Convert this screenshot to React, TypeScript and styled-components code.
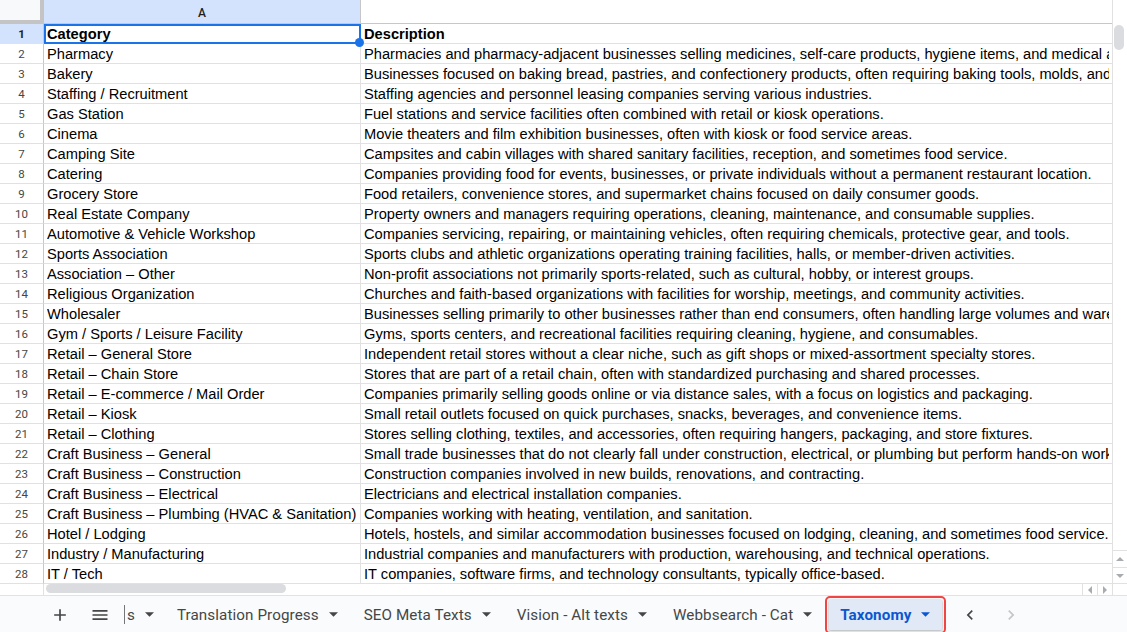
import React from "react";
import styled, { createGlobalStyle } from "styled-components";

const GlobalStyle = createGlobalStyle`
  html, body { margin: 0; padding: 0; background: #ffffff; overflow: hidden; }
  * { box-sizing: border-box; }
`;

const rows: [string, string][] = [
  ["Category", "Description"],
  ["Pharmacy", "Pharmacies and pharmacy-adjacent businesses selling medicines, self-care products, hygiene items, and medical aids."],
  ["Bakery", "Businesses focused on baking bread, pastries, and confectionery products, often requiring baking tools, molds, and packaging."],
  ["Staffing / Recruitment", "Staffing agencies and personnel leasing companies serving various industries."],
  ["Gas Station", "Fuel stations and service facilities often combined with retail or kiosk operations."],
  ["Cinema", "Movie theaters and film exhibition businesses, often with kiosk or food service areas."],
  ["Camping Site", "Campsites and cabin villages with shared sanitary facilities, reception, and sometimes food service."],
  ["Catering", "Companies providing food for events, businesses, or private individuals without a permanent restaurant location."],
  ["Grocery Store", "Food retailers, convenience stores, and supermarket chains focused on daily consumer goods."],
  ["Real Estate Company", "Property owners and managers requiring operations, cleaning, maintenance, and consumable supplies."],
  ["Automotive & Vehicle Workshop", "Companies servicing, repairing, or maintaining vehicles, often requiring chemicals, protective gear, and tools."],
  ["Sports Association", "Sports clubs and athletic organizations operating training facilities, halls, or member-driven activities."],
  ["Association – Other", "Non-profit associations not primarily sports-related, such as cultural, hobby, or interest groups."],
  ["Religious Organization", "Churches and faith-based organizations with facilities for worship, meetings, and community activities."],
  ["Wholesaler", "Businesses selling primarily to other businesses rather than end consumers, often handling large volumes and warehousing."],
  ["Gym / Sports / Leisure Facility", "Gyms, sports centers, and recreational facilities requiring cleaning, hygiene, and consumables."],
  ["Retail – General Store", "Independent retail stores without a clear niche, such as gift shops or mixed-assortment specialty stores."],
  ["Retail – Chain Store", "Stores that are part of a retail chain, often with standardized purchasing and shared processes."],
  ["Retail – E-commerce / Mail Order", "Companies primarily selling goods online or via distance sales, with a focus on logistics and packaging."],
  ["Retail – Kiosk", "Small retail outlets focused on quick purchases, snacks, beverages, and convenience items."],
  ["Retail – Clothing", "Stores selling clothing, textiles, and accessories, often requiring hangers, packaging, and store fixtures."],
  ["Craft Business – General", "Small trade businesses that do not clearly fall under construction, electrical, or plumbing but perform hands-on work."],
  ["Craft Business – Construction", "Construction companies involved in new builds, renovations, and contracting."],
  ["Craft Business – Electrical", "Electricians and electrical installation companies."],
  ["Craft Business – Plumbing (HVAC & Sanitation)", "Companies working with heating, ventilation, and sanitation."],
  ["Hotel / Lodging", "Hotels, hostels, and similar accommodation businesses focused on lodging, cleaning, and sometimes food service."],
  ["Industry / Manufacturing", "Industrial companies and manufacturers with production, warehousing, and technical operations."],
  ["IT / Tech", "IT companies, software firms, and technology consultants, typically office-based."],
];

const tabs = ["s", "Translation Progress", "SEO Meta Texts", "Vision - Alt texts", "Webbsearch - Cat"];

const Page = styled.div`
  width: 1127px;
  height: 632px;
  display: flex;
  flex-direction: column;
  overflow: hidden;
`;

const Main = styled.div`
  display: flex;
  height: 595px;
`;

const Sheet = styled.div`
  flex: 1;
  min-width: 0;
  display: flex;
  flex-direction: column;
`;

const GridRow = styled.div<{ $header?: boolean }>`
  display: grid;
  grid-template-columns: 44px 317px 1fr;
  height: ${(p) => (p.$header ? 24 : 20)}px;
`;

const Corner = styled.div`
  background: #f8f9fa;
  border-right: 4px solid #c4c4c4;
  border-bottom: 4px solid #c4c4c4;
`;

const ColHeader = styled.div<{ $selected?: boolean; $last?: boolean }>`
  background: ${(p) => (p.$selected ? "#d3e3fd" : "#ffffff")};
  border-bottom: 1px solid #c7c7c7;
  border-right: ${(p) => (p.$last ? "none" : "1px solid #c7c7c7")};
  display: flex;
  align-items: center;
  justify-content: center;
  font-family: "Roboto", "Liberation Sans", sans-serif;
  font-size: 12px;
  font-weight: 500;
  color: #1f1f1f;
  padding-top: 2px;
`;

const RowHeader = styled.div<{ $selected?: boolean }>`
  background: ${(p) => (p.$selected ? "#d3e3fd" : "#ffffff")};
  border-right: 1px solid #c7c7c7;
  border-bottom: 1px solid #e1e1e1;
  display: flex;
  align-items: center;
  justify-content: center;
  font-family: "Roboto", "Liberation Sans", sans-serif;
  font-size: 11.5px;
  font-weight: ${(p) => (p.$selected ? 700 : 400)};
  color: ${(p) => (p.$selected ? "#1f1f1f" : "#444746")};
`;

const Cell = styled.div<{ $bold?: boolean; $last?: boolean }>`
  position: relative;
  min-width: 0;
  border-bottom: 1px solid #e1e1e1;
  border-right: ${(p) => (p.$last ? "none" : "1px solid #e1e1e1")};
  display: flex;
  align-items: flex-end;
  padding: 0 3px 0 3px;
  font-family: "Liberation Sans", Arial, sans-serif;
  font-size: 14.67px;
  line-height: 18px;
  font-weight: ${(p) => (p.$bold ? 700 : 400)};
  color: #000000;
`;

const CellText = styled.span`
  display: block;
  width: 100%;
  overflow: hidden;
  white-space: nowrap;
`;

const Selection = styled.div`
  position: absolute;
  top: 0;
  left: 0;
  right: -1px;
  bottom: -1px;
  border: 2px solid #1a73e8;
  z-index: 5;
  pointer-events: none;
`;

const Handle = styled.div`
  position: absolute;
  right: -5px;
  bottom: -5px;
  width: 9px;
  height: 9px;
  border-radius: 50%;
  background: #1a73e8;
  z-index: 6;
`;

const HScrollRow = styled.div`
  display: flex;
  height: 11px;
`;

const HScrollLead = styled.div`
  width: 44px;
  border-right: 1px solid #e1e1e1;
`;

const HTrack = styled.div`
  flex: 1;
  padding-left: 2px;
`;

const HThumb = styled.div`
  width: 240px;
  height: 9px;
  border-radius: 5px;
  background: #dadce0;
`;

const ArrowButton = styled.div<{ $w?: number; $h?: number }>`
  width: ${(p) => p.$w ?? 15}px;
  height: ${(p) => p.$h ?? 15}px;
  border-left: 1px solid #e1e1e1;
  display: flex;
  align-items: center;
  justify-content: center;
`;

const VScroll = styled.div`
  width: 15px;
  border-left: 1px solid #e1e1e1;
  display: flex;
  flex-direction: column;
  background: #ffffff;
`;

const VTop = styled.div`
  height: 24px;
`;

const VTrack = styled.div`
  flex: 1;
  padding: 1px 0 0 1px;
`;

const VThumb = styled.div`
  width: 10px;
  height: 25px;
  border-radius: 5px;
  background: #dadce0;
`;

const VButton = styled.div<{ $h: number }>`
  height: ${(p) => p.$h}px;
  border-top: 1px solid #e1e1e1;
  display: flex;
  align-items: center;
  justify-content: center;
`;

const TabBar = styled.div`
  height: 37px;
  border-top: 1px solid #e1e3e1;
  background: #f9fbfd;
  display: flex;
  align-items: center;
  padding-left: 44px;
  padding-top: 1px;
  font-family: "Roboto", "Open Sans", sans-serif;
`;

const IconButton = styled.div`
  width: 32px;
  height: 32px;
  display: flex;
  align-items: center;
  justify-content: center;
  color: #444746;
  margin-right: 8px;
`;

const TabStrip = styled.div`
  display: flex;
  align-items: center;
  border-left: 1px solid #747775;
  height: 19px;
  overflow: visible;
`;

const Tab = styled.div<{ $active?: boolean; $clipped?: boolean }>`
  display: flex;
  align-items: center;
  gap: 10px;
  height: 30px;
  padding: 0 ${(p) => (p.$active ? 12 : p.$clipped ? 10 : 13)}px 0
    ${(p) => (p.$clipped ? 2 : p.$active ? 11 : 13)}px;
  margin-left: ${(p) => (p.$active ? 4 : 0)}px;
  font-size: 15.2px;
  letter-spacing: 0.1px;
  font-weight: ${(p) => (p.$active ? 700 : 400)};
  color: ${(p) => (p.$active ? "#0b57d0" : "#444746")};
  background: ${(p) => (p.$active ? "#e1e9f7" : "transparent")};
  border-radius: 1px;
  box-shadow: ${(p) => (p.$active ? "0 1px 3px rgba(60,64,67,0.35), 0 0 2px rgba(60,64,67,0.2)" : "none")};
  outline: ${(p) => (p.$active ? "2px solid #f04545" : "none")};
  outline-offset: 2px;
  white-space: nowrap;
`;

const Nav = styled.div`
  display: flex;
  align-items: center;
  gap: 9px;
  margin-left: 12px;
`;

const NavButton = styled.div<{ $disabled?: boolean }>`
  width: 32px;
  height: 32px;
  display: flex;
  align-items: center;
  justify-content: center;
  color: ${(p) => (p.$disabled ? "#c4c7c5" : "#444746")};
`;

const Caret = ({ color = "currentColor" }: { color?: string }) => (
  <svg width="9" height="5" viewBox="0 0 10 5">
    <path d="M0 0 L5 5 L10 0 Z" fill={color} />
  </svg>
);

const Tri = ({ dir }: { dir: "up" | "down" | "left" | "right" }) => {
  const d = {
    up: "M0 4 L4 0 L8 4 Z",
    down: "M0 0 L8 0 L4 4 Z",
    left: "M4 0 L4 8 L0 4 Z",
    right: "M0 0 L4 4 L0 8 Z",
  }[dir];
  const horiz = dir === "left" || dir === "right";
  return (
    <svg width={horiz ? 4 : 8} height={horiz ? 8 : 4} viewBox={horiz ? "0 0 4 8" : "0 0 8 4"}>
      <path d={d} fill="#a8abaf" />
    </svg>
  );
};

export default function App() {
  return (
    <Page>
      <GlobalStyle />
      <Main>
        <Sheet>
          <GridRow $header>
            <Corner />
            <ColHeader $selected>A</ColHeader>
            <ColHeader $last />
          </GridRow>
          {rows.map(([a, b], i) => (
            <GridRow key={i}>
              <RowHeader $selected={i === 0}>{i + 1}</RowHeader>
              <Cell $bold={i === 0}>
                <CellText>{a}</CellText>
                {i === 0 && (
                  <Selection>
                    <Handle />
                  </Selection>
                )}
              </Cell>
              <Cell $bold={i === 0} $last>
                <CellText>{b}</CellText>
              </Cell>
            </GridRow>
          ))}
          <HScrollRow>
            <HScrollLead />
            <HTrack>
              <HThumb />
            </HTrack>
            <ArrowButton $h={11}>
              <Tri dir="left" />
            </ArrowButton>
            <ArrowButton $h={11}>
              <Tri dir="right" />
            </ArrowButton>
          </HScrollRow>
        </Sheet>
        <VScroll>
          <VTop />
          <VTrack>
            <VThumb />
          </VTrack>
          <VButton $h={17}>
            <Tri dir="up" />
          </VButton>
          <VButton $h={16}>
            <Tri dir="down" />
          </VButton>
          <VButton $h={12} />
        </VScroll>
      </Main>
      <TabBar>
        <IconButton>
          <svg width="20" height="20" viewBox="0 0 24 24">
            <path d="M19 13h-6v6h-2v-6H5v-2h6V5h2v6h6v2z" fill="currentColor" />
          </svg>
        </IconButton>
        <IconButton>
          <svg width="20" height="20" viewBox="0 0 24 24">
            <path d="M3 18h18v-2H3v2zm0-5h18v-2H3v2zm0-7v2h18V6H3z" fill="currentColor" />
          </svg>
        </IconButton>
        <TabStrip>
          {tabs.map((t, i) => (
            <Tab key={t} $clipped={i === 0}>
              {t}
              <Caret />
            </Tab>
          ))}
          <Tab $active>
            Taxonomy
            <Caret />
          </Tab>
        </TabStrip>
        <Nav>
          <NavButton>
            <svg width="20" height="20" viewBox="0 0 24 24">
              <path d="M15.41 7.41 14 6l-6 6 6 6 1.41-1.41L10.83 12z" fill="currentColor" />
            </svg>
          </NavButton>
          <NavButton $disabled>
            <svg width="20" height="20" viewBox="0 0 24 24">
              <path d="M10 6 8.59 7.41 13.17 12l-4.58 4.59L10 18l6-6z" fill="currentColor" />
            </svg>
          </NavButton>
        </Nav>
      </TabBar>
    </Page>
  );
}
